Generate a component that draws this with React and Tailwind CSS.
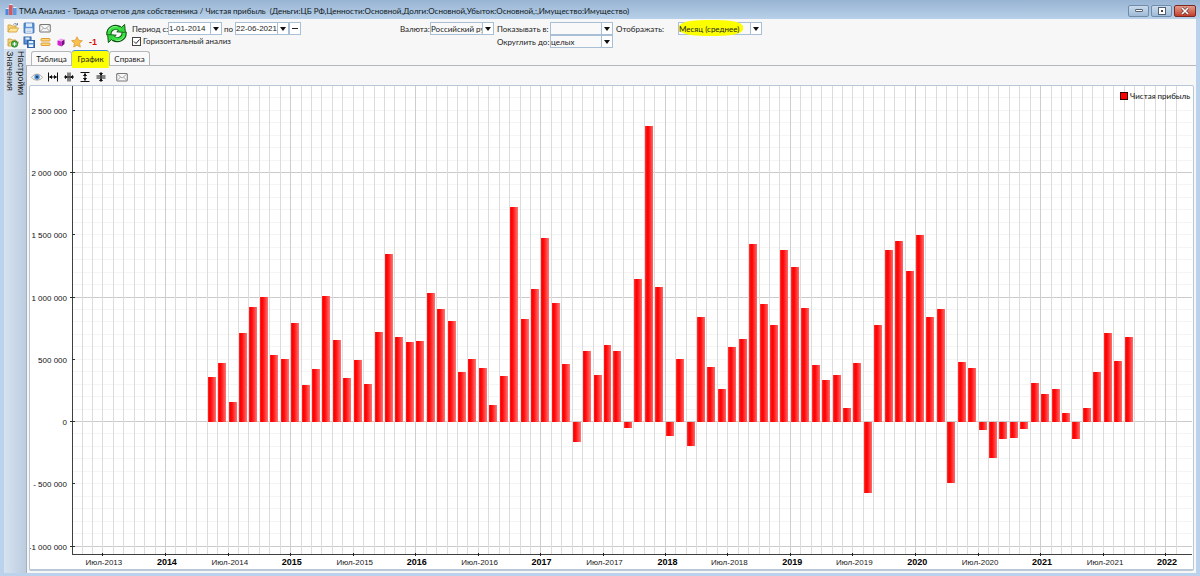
import React from "react";

const ZERO_Y = 336;
const MILLION = 124.5;
const PLOT_LEFT = 43;
const PLOT_RIGHT = 1163;
const PLOT_BOTTOM = 469;
const YEAR_X = 136;
const MONTH = 10.43;

// Monthly averages in thousands of roubles, May 2014 onwards.
const VALUES = [
  359, 476, 158, 712, 921, 1002, 535, 508, 798, 295, 423, 1012, 659, 353, 498, 305, 723, 1346, 680, 643,
  648, 1039, 905, 814, 399, 506, 434, 134, 369, 1725, 825, 1066, 1476, 953, 463, -158, 568, 378, 621, 568,
  -46, 1151, 2378, 1082, -115, 506, -190, 841, 442, 263, 602, 669, 1430, 948, 782, 1379, 1243, 916, 460,
  337, 375, 115, 474, -570, 782, 1382, 1452, 1211, 1502, 846, 905, -487, 482, 431, -62, -287, -134, -126,
  -56, 311, 225, 265, 70, -134, 112, 402, 717, 488, 685,
];

const yOf = (thousands) => ZERO_Y - (thousands / 1000) * MILLION;

const Y_LABELS = [
  [2500, "2 500 000"], [2000, "2 000 000"], [1500, "1 500 000"], [1000, "1 000 000"],
  [500, "500 000"], [0, "0"], [-500, "- 500 000"], [-1000, "-1 000 000"],
];

const X_LABELS = [
  [-6, "Июл-2013"], [0, "2014"], [6, "Июл-2014"], [12, "2015"], [18, "Июл-2015"], [24, "2016"],
  [30, "Июл-2016"], [36, "2017"], [42, "Июл-2017"], [48, "2018"], [54, "Июл-2018"], [60, "2019"],
  [66, "Июл-2019"], [72, "2020"], [78, "Июл-2020"], [84, "2021"], [90, "Июл-2021"], [96, "2022"],
];

function Chart() {
  const months = Array.from({ length: 106 }, (_, i) => i - 8);
  const hundreds = Array.from({ length: 38 }, (_, i) => (i - 10) * 100);
  return (
    <svg viewBox="0 0 1164 483" className="block w-full" role="img" aria-label="Чистая прибыль">
      <defs>
        <linearGradient id="bar" x1="0" x2="1" y1="0" y2="0">
          <stop offset="0" stopColor="#ff3030" />
          <stop offset="0.2" stopColor="#ff0000" />
          <stop offset="0.4" stopColor="#ff0c0c" />
          <stop offset="1" stopColor="#ff7070" />
        </linearGradient>
      </defs>
      <g shapeRendering="crispEdges">
        {hundreds.map((v) => (
          <line key={v} x1={PLOT_LEFT} x2={PLOT_RIGHT} y1={Math.round(yOf(v)) - 0.5} y2={Math.round(yOf(v)) - 0.5} stroke={v % 1000 === 0 ? "#cbcbcb" : "#f4f4f4"} />
        ))}
        {months.map((m) => {
          const x = Math.round(YEAR_X + m * MONTH) - 0.5;
          return <line key={m} x1={x} x2={x} y1="0" y2={PLOT_BOTTOM} stroke={m % 12 === 0 ? "#cdcdcd" : "#dcdcdc"} />;
        })}
        {VALUES.map((v, i) => {
          const x = Math.round(YEAR_X + (i + 4) * MONTH);
          const y = Math.round(yOf(v));
          return <rect key={i} x={x} width="8" y={Math.min(y, ZERO_Y)} height={Math.abs(ZERO_Y - y)} fill="url(#bar)" />;
        })}
        <path d={`M${PLOT_LEFT - 0.5} 0V${PLOT_BOTTOM - 0.5}H${PLOT_RIGHT}`} fill="none" stroke="#404040" />
        {Y_LABELS.map(([v]) => (
          <line key={v} x1={v % 1000 === 0 ? PLOT_LEFT - 3 : PLOT_LEFT - 1} x2={PLOT_LEFT + 2} y1={Math.round(yOf(v)) - 0.5} y2={Math.round(yOf(v)) - 0.5} stroke="#303030" />
        ))}
        {X_LABELS.map(([m]) => {
          const x = Math.round(YEAR_X + m * MONTH) - 0.5;
          return <line key={m} x1={x} x2={x} y1={PLOT_BOTTOM - 2} y2={PLOT_BOTTOM + 1} stroke="#202020" />;
        })}
        <rect x="1091.5" y="6.5" width="7" height="7" fill="#ff0000" stroke="#300" />
      </g>
      <g fill="#111">
        {Y_LABELS.map(([v, t]) => (
          <text key={v} x={PLOT_LEFT - 6} y={Math.round(yOf(v)) + 3} textAnchor="end" className="font-['Liberation_Sans',sans-serif] text-[8px]">{t}</text>
        ))}
        {X_LABELS.map(([m, t]) => (
          <text key={m} x={Math.round(YEAR_X + m * MONTH) + 1} y="479" textAnchor="middle" className={m % 12 === 0 ? "font-['Liberation_Sans',sans-serif] text-[9px] font-bold" : "font-['Liberation_Sans',sans-serif] text-[8px]"} fill={m % 12 === 0 ? "#000" : "#222"}>{t}</text>
        ))}
        <text x="1101" y="13" className="text-[8px]">Чистая прибыль</text>
      </g>
    </svg>
  );
}

function IconButton({ label, children }) {
  return (
    <button type="button" aria-label={label} className="flex h-3 w-4 items-center justify-center">
      <svg viewBox="0 0 12 12" className="size-3">{children}</svg>
    </button>
  );
}

const Folder = () => (
  <>
    <path d="M1 10V3h3l1 1h4v2" fill="#f6d67c" stroke="#c99a35" strokeWidth=".8" />
    <path d="M1 10l2-4h8.500l-2 4z" fill="#ffe596" stroke="#c99a35" strokeWidth=".8" />
  </>
);

const Envelope = () => (
  <>
    <rect x=".7" y="2.500" width="10.600" height="7.500" rx=".5" fill="#f7f7f7" stroke="#777" />
    <path d="M1 3l5 4 5-4M1 9.700l3.500-3.700M11 9.700L7.500 6" fill="none" stroke="#888" strokeWidth=".7" />
  </>
);

const Floppy = () => (
  <>
    <rect x="1" y="1" width="10" height="10" rx=".6" fill="#5c93d6" stroke="#3a6bad" strokeWidth=".8" />
    <rect x="3" y="1.300" width="6" height="3.500" fill="#dcebfa" />
    <rect x="2.500" y="6.300" width="7" height="4.500" fill="#f1f6fc" />
    <path d="M3.500 8h5M3.500 9.500h5" stroke="#8db1dd" strokeWidth=".6" />
  </>
);

function TopIcons() {
  return (
    <div className="grid w-24 grid-cols-6 gap-y-[2px] self-start">
      <IconButton label="Открыть">
        <Folder /><path d="M6.500 2.500c1.500-1.500 3-1 3.500 0M10.500 1v2h-2" fill="none" stroke="#5b6f96" strokeWidth=".8" />
      </IconButton>
      <IconButton label="Сохранить"><Floppy /></IconButton>
      <IconButton label="Отправить"><Envelope /></IconButton>
      <span className="col-span-3" />
      <IconButton label="Добавить">
        <Folder /><circle cx="7.500" cy="8" r="3.300" fill="#3fa93b" stroke="#28782a" strokeWidth=".6" /><path d="M5.500 8h4M7.500 6v4" stroke="#fff" strokeWidth="1.200" />
      </IconButton>
      <IconButton label="Сохранить все">
        <rect x="1" y="1" width="7" height="7" fill="#5c93d6" stroke="#3163a6" /><rect x="2.500" y="1.500" width="4" height="2" fill="#e6f0fb" />
        <rect x="4.500" y="4.500" width="7" height="7" fill="#5c93d6" stroke="#3163a6" /><rect x="6" y="5" width="4" height="2" fill="#e6f0fb" /><rect x="6" y="8.500" width="4" height="2.500" fill="#f1f6fc" />
      </IconButton>
      <IconButton label="Строки">
        <rect x="2" y="2.500" width="9" height="2.500" rx=".8" fill="#ffd878" stroke="#d58a20" strokeWidth=".8" /><rect x="2" y="7" width="9" height="2.500" rx=".8" fill="#ffd878" stroke="#d58a20" strokeWidth=".8" />
      </IconButton>
      <IconButton label="Куб">
        <path d="M2.500 4.500l3.500-2 3.500 1-3 2z" fill="#f3a0f3" /><path d="M2.500 4.500l4 1v5l-4-1.500z" fill="#d51fd0" /><path d="M6.500 5.500l3-2v4.500l-3 2.500z" fill="#7a0c85" />
      </IconButton>
      <IconButton label="Избранное">
        <path d="M6 .8l1.600 3.400 3.800.5-2.800 2.600.7 3.800L6 9.200l-3.300 1.900.7-3.800L.6 4.700l3.800-.5z" fill="#f9c04a" stroke="#d9912a" strokeWidth=".7" />
      </IconButton>
      <button type="button" className="h-3 w-4 font-['Liberation_Sans',sans-serif] text-[9px] leading-3 font-bold text-[#d81010]">-1</button>
    </div>
  );
}

function Refresh() {
  return (
    <button type="button" aria-label="Обновить" className="mt-px ml-[5px] size-[21px] self-start">
      <svg viewBox="0 0 22 22" className="size-full" strokeLinejoin="round">
        <g fill="none" strokeLinecap="butt">
          <path d="M3 12.500C2.500 6 9 2.500 14.500 5.800" stroke="#0a5210" strokeWidth="5.400" />
          <path d="M19 9.500C19.500 16 13 19.500 7.500 16.200" stroke="#0a5210" strokeWidth="5.400" />
        </g>
        <g fill="#2fd53a" stroke="#0a5210">
          <path d="M19.500 1.500l.8 8.500-9-.8z" />
          <path d="M2.500 20.500l-.8-8.500 9 .8z" />
        </g>
        <g fill="none" stroke="#38e042" strokeWidth="3.400">
          <path d="M3.100 12C2.800 6 9 2.700 15.500 6.600" />
          <path d="M18.900 10C19.200 16 13 19.300 6.500 15.400" />
        </g>
        <path d="M3 8C5 4 9 3 12 4M19 14c-2 4-6 5-9 4" fill="none" stroke="#a6f5a4" strokeWidth=".9" />
      </svg>
    </button>
  );
}

function DropButton({ label }) {
  return (
    <button type="button" aria-label={label} className="flex w-[11px] items-center justify-center border-l border-[#a9bfd5] bg-white">
      <svg viewBox="0 0 6 4" className="h-1 w-[6px]"><path d="M0 0h6L3 4z" fill="#111" /></svg>
    </button>
  );
}

function DateField({ id, value }) {
  return (
    <span className="flex h-[13px] w-[54px] border border-[#a9bfd5] bg-white">
      <input id={id} defaultValue={value} className="w-0 min-w-0 flex-1 bg-transparent font-['Liberation_Sans',sans-serif] text-[8px] outline-none" />
      <DropButton label="Календарь" />
    </span>
  );
}

function Picker({ id, options, className, marked }) {
  return (
    <span className={`relative flex h-[13px] border border-[#a9bfd5] bg-[#f9f9fa] ${className}`}>
      {marked && <span className="absolute -top-[3px] right-[18px] -bottom-[2px] left-0 rounded-[40%] bg-[#fcff00]" />}
      <select id={id} className="relative w-full appearance-none bg-transparent pr-[11px] text-[8px] outline-none">
        {options.map((o) => <option key={o}>{o}</option>)}
      </select>
      <span className="pointer-events-none absolute inset-y-0 right-0 flex w-[11px] items-center justify-center border-l border-[#a9bfd5] bg-white">
        <svg viewBox="0 0 6 4" className="h-1 w-[6px]"><path d="M0 0h6L3 4z" fill="#111" /></svg>
      </span>
    </span>
  );
}

function Toolbar() {
  return (
    <div className="flex h-[30px] items-start pt-[3px] pr-1 pl-px whitespace-nowrap">
      <TopIcons />
      <Refresh />
      <div className="ml-[5px] flex w-[268px] flex-col">
        <div className="flex h-[13px] items-center">
          <label htmlFor="from" className="w-[36px]">Период с:</label>
          <DateField id="from" value="1-01-2014" />
          <label htmlFor="to" className="w-[13px] pl-[2px]">по</label>
          <DateField id="to" value="22-06-2021" />
          <button type="button" aria-label="Сбросить" className="flex h-[13px] w-3 items-center justify-center border border-[#a9bfd5] bg-white"><span className="h-px w-[6px] bg-[#222]" /></button>
        </div>
        <label className="flex h-3 items-center gap-[2px]">
          <span className="relative flex size-[9px]">
            <input type="checkbox" defaultChecked className="size-full appearance-none border border-[#444] bg-white" />
            <svg viewBox="0 0 9 9" className="pointer-events-none absolute inset-0"><path d="M2 4.500l2 2 3.500-4" fill="none" stroke="#222" /></svg>
          </span>
          Горизонтальный анализ
        </label>
      </div>
      <div className="flex h-[13px] items-center">
        <label htmlFor="currency" className="w-[30px]">Валюта:</label>
        <Picker id="currency" options={["Российский рубль"]} className="w-[64px]" />
      </div>
      <div className="ml-[3px] grid grid-cols-[53px_63px] items-center">
        <label htmlFor="unit">Показывать в:</label>
        <Picker id="unit" options={[""]} className="w-full" />
        <label htmlFor="round">Округлить до:</label>
        <Picker id="round" options={["целых"]} className="w-full" />
      </div>
      <div className="ml-[3px] flex h-[13px] items-center">
        <label htmlFor="display" className="w-[62px]">Отображать:</label>
        <Picker id="display" options={["Месяц (среднее)"]} className="w-[84px]" marked />
      </div>
    </div>
  );
}

function Tab({ active, children }) {
  return (
    <button
      type="button"
      role="tab"
      aria-selected={!!active}
      className={active
        ? "-mb-[3px] h-[18px] w-[37px] rounded-t-[3px] border-t border-[#3c8ad0] bg-[#fcff00] pb-[2px] text-[8px]"
        : "h-[14px] w-[41px] rounded-t-[3px] border border-b-0 border-[#b4b8bd] bg-[#fafafa] text-[8px]"}
    >
      {children}
    </button>
  );
}

function ChartTools() {
  return (
    <div className="flex h-[19px] items-center pt-[2px]">
      <IconButton label="Просмотр">
        <path d="M.5 6.500C3 2 9 2 11.500 6.500 9 10 3 10 .5 6.500z" fill="#eef4fa" stroke="#b5a58f" strokeWidth=".9" /><circle cx="6" cy="6" r="2.700" fill="#4f8fcf" /><circle cx="6" cy="6" r="1.100" fill="#14304f" />
      </IconButton>
      <IconButton label="Растянуть по ширине"><path d="M1.500 1.500v9M10.500 1.500v9M2 6h8M4.500 4.500L3 6l1.500 1.500zM7.500 4.500L9 6 7.500 7.500z" fill="#111" stroke="#111" /></IconButton>
      <IconButton label="Сжать по ширине"><path d="M5 1.500v9M7 1.500v9M1 6h10M2.500 4.500L4 6 2.500 7.500zM9.500 4.500L8 6l1.500 1.500z" fill="#111" stroke="#111" /></IconButton>
      <IconButton label="Растянуть по высоте"><path d="M1.500 1.500h9M1.500 10.500h9M6 2v8M4.500 4.500L6 3l1.500 1.500zM4.500 7.500L6 9l1.500-1.500z" fill="#111" stroke="#111" /></IconButton>
      <IconButton label="Сжать по высоте"><path d="M1.500 5h9M1.500 7h9M6 1v10M4.500 2.500L6 4l1.500-1.500zM4.500 9.500L6 8l1.500 1.500z" fill="#111" stroke="#111" /></IconButton>
      <span className="w-[5px]" />
      <IconButton label="Отправить график"><Envelope /></IconButton>
    </div>
  );
}

const winButton = "flex h-3 w-[21px] items-center justify-center rounded-[2px] border border-[#6f8cab] bg-linear-to-b from-[#c9daeb] to-[#9fbbd8]";

export default function App() {
  return (
    <div className="flex min-h-[576px] flex-col bg-[#bad2eb] pr-1 pb-1 pl-1 font-[Lato,'Liberation_Sans',sans-serif] text-[8px] leading-3 text-[#1c1c1c]">
      <header className="-mx-1 flex h-[19px] items-center bg-linear-to-b from-[#98b4d3] to-[#b8d0e9] pr-1 pl-[5px]">
        <svg viewBox="0 0 12 12" className="size-3">
          <path d="M.5 5h3v6h-3z" fill="#4c86d9" /><path d="M4 1h3.500v10H4z" fill="#d9575b" /><path d="M8 4h3.500v7H8z" fill="#5b9ae0" /><path d="M.5 5l1-1h2v1M4 1l1-1h2.500v1M8 4l1-1h2.500v1" fill="#e6eefa" />
        </svg>
        <h1 className="ml-[2px] flex-1 pt-[3px] text-[8px] whitespace-pre text-[#101820]">ТМА Анализ - Триада отчетов для собственника / Чистая прибыль  (Деньги:ЦБ РФ,Ценности:Основной,Долги:Основной,Убыток:Основной,:,Имущество:Имущество)</h1>
        <div className="flex gap-[2px] pt-[2px]">
          <button type="button" aria-label="Свернуть" className={winButton}><span className="h-[3px] w-2 rounded-[1px] border border-[#555f70] bg-white" /></button>
          <button type="button" aria-label="Развернуть" className={winButton}><span className="size-[6px] border-2 border-white bg-[#445] outline outline-[#555f70]" /></button>
          <button type="button" aria-label="Закрыть" className="flex h-3 w-[22px] items-center justify-center rounded-[2px] border border-[#7a2a22] bg-linear-to-b from-[#e29a8c] to-[#c13d28]">
            <svg viewBox="0 0 8 8" className="size-2"><path d="M1 1l6 6M7 1L1 7" stroke="#5a2a2a" strokeWidth="2.800" /><path d="M1 1l6 6M7 1L1 7" stroke="#fff" strokeWidth="1.700" /></svg>
          </button>
        </div>
      </header>
      <main className="flex flex-1 flex-col bg-[#f7f7f7]">
        <Toolbar />
        <div className="flex flex-1">
          <nav className="flex w-[22px] bg-linear-to-r from-[#d6e2f0] to-[#bccde0] font-['Liberation_Sans',sans-serif]">
            <button type="button" className="flex w-[11px] items-center pt-[2px] text-[9px] leading-[11px] [writing-mode:vertical-rl]">Значения</button>
            <button type="button" className="flex w-[11px] items-center pt-[2px] text-[9px] leading-[11px] [writing-mode:vertical-rl]">Настройки</button>
          </nav>
          <div className="flex min-w-0 flex-1 flex-col">
            <div role="tablist" className="flex h-[17px] items-end border-b border-[#b4b8bd] pl-[5px]">
              <Tab>Таблица</Tab>
              <Tab active>График</Tab>
              <Tab>Справка</Tab>
            </div>
            <div className="flex-1 border-l border-[#a8b0ba] px-[2px] pb-[2px]">
              <ChartTools />
              <div className="rounded-[2px] border border-b-2 border-[#b9c8d8] bg-white"><Chart /></div>
            </div>
          </div>
        </div>
      </main>
    </div>
  );
}
